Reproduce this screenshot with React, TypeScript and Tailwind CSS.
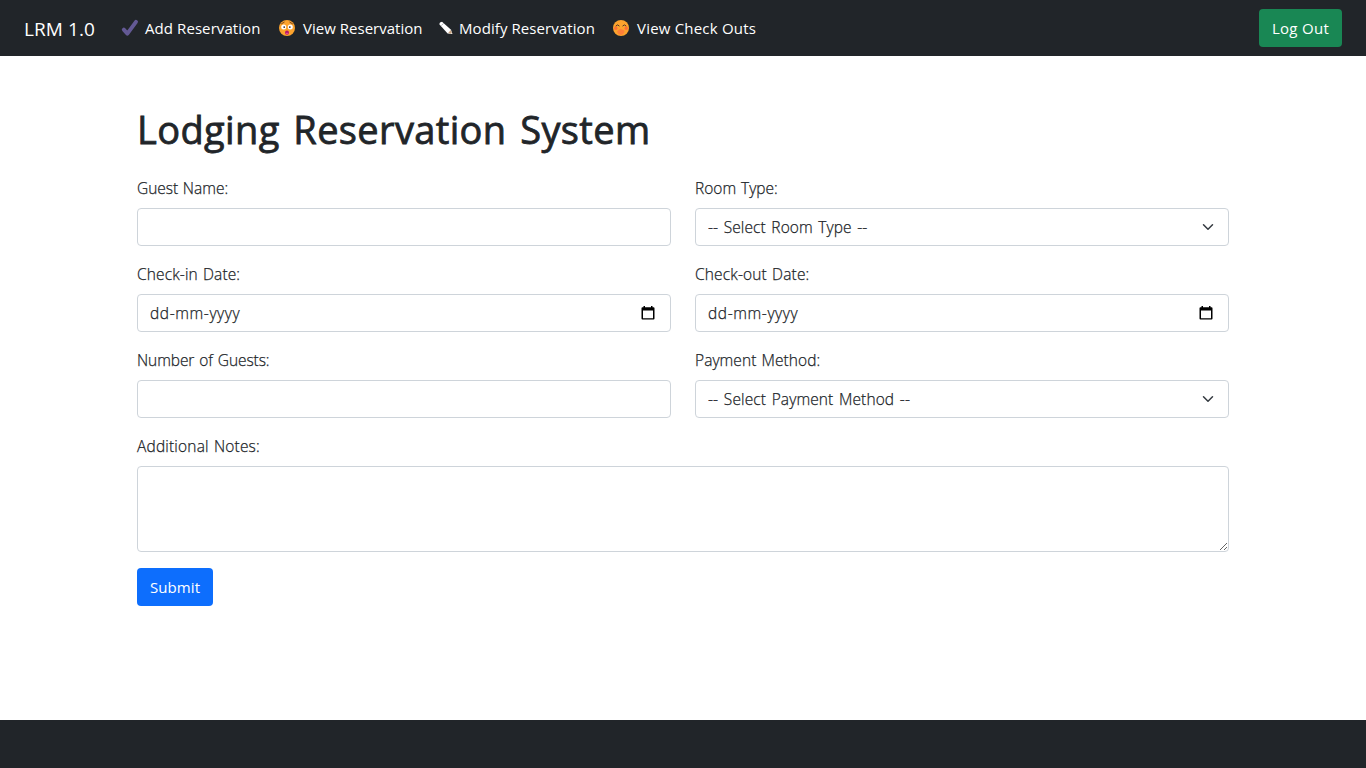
import React from "react";

const control =
  "h-[38px] w-full rounded border border-[#ced4da] bg-white text-[#212529] outline-none";

const bodyText = "text-[15.5px] leading-6 font-light [-webkit-text-stroke:0.25px_#212529]";

function CheckIcon() {
  return (
    <svg width="18" height="18" viewBox="0 0 18 18" className="shrink-0">
      <path d="M2.8 10.6 6.4 14.6 15 2.8" fill="none" stroke="#635994" strokeWidth="3.9" strokeLinecap="round" strokeLinejoin="round" />
    </svg>
  );
}

function FlushedFace() {
  return (
    <svg width="16" height="16" viewBox="0 0 16 16" className="shrink-0">
      <circle cx="8" cy="8" r="8" fill="#fca32d" />
      <path d="M2.5 3.8 5.2 2.2M10.8 2.2 13.5 3.8" stroke="#70401e" strokeWidth="0.9" strokeLinecap="round" />
      <circle cx="4.7" cy="7" r="2.5" fill="#fff" />
      <circle cx="11.3" cy="7" r="2.5" fill="#fff" />
      <circle cx="5.2" cy="7.1" r="0.9" fill="#3c2b2b" />
      <circle cx="10.8" cy="7.1" r="0.9" fill="#3c2b2b" />
      <ellipse cx="8" cy="12.6" rx="2" ry="2.2" fill="#b4146e" />
      <path d="M6.7 13.8a1.3 1 0 0 1 2.6 0" fill="#f55a9b" />
    </svg>
  );
}

function PencilIcon() {
  return (
    <svg width="14" height="14" viewBox="0 0 14 14" className="shrink-0">
      <path d="M.3 3.3Q.3 1.2 3 .8L12 8.700l1.3 4.300-4.700-.6z" fill="#fff" />
      <path d="m2.3 4.6 2.3-2.3" stroke="#8b929a" strokeWidth="0.7" />
      <path d="m9.2 12 2.5-3 1.6 4z" fill="#c7a27d" />
      <path d="m12 12.7.9-.9.4 1.3z" fill="#fff" />
    </svg>
  );
}

function GigglingFace() {
  return (
    <svg width="16" height="16" viewBox="0 0 16 16" className="shrink-0">
      <circle cx="8" cy="8" r="8" fill="#fca32d" />
      <circle cx="2.8" cy="8.3" r="1.7" fill="#ff6f38" />
      <circle cx="13.2" cy="8.3" r="1.7" fill="#ff6f38" />
      <path d="M3 5.8Q4.6 3.7 6.2 5.8M9.800 5.800Q11.400 3.700 13 5.800" fill="none" stroke="#51372b" strokeWidth="1" strokeLinecap="round" />
      <path d="M4 11.4 6.3 9.2Q7.2 8.4 8 9.1l2.500 1q1.600.9.8 2.500-1.300 2.700-4.100 2.200-2.500-.4-3.200-3.400z" fill="#ff8038" />
    </svg>
  );
}

function Chevron() {
  return (
    <svg width="16" height="12" viewBox="0 0 16 16" className="pointer-events-none absolute top-[13px] right-[13px]">
      <path d="m2 5 6 6 6-6" fill="none" stroke="#343a40" strokeWidth="2" strokeLinecap="round" strokeLinejoin="round" />
    </svg>
  );
}

function CalendarIcon() {
  return (
    <svg width="14" height="15" viewBox="0 0 14 15">
      <path fillRule="evenodd" d="M2.5 0H4v1.300h6V0h1.500v1.300h1a1 1 0 0 1 1 1v10.200a1 1 0 0 1-1 1h-11a1 1 0 0 1-1-1V2.300a1 1 0 0 1 1-1h1zM2 4.500v7.700h10V4.500z" fill="#000" />
    </svg>
  );
}

function Field({ label, tracking, children }: { label: string; tracking: string; children: React.ReactNode }) {
  return (
    <label className="block">
      <span className={`mb-2 block h-6 ${bodyText} ${tracking}`}>{label}</span>
      {children}
    </label>
  );
}

function DateControl() {
  return (
    <div className={`${control} flex items-center justify-between pr-[15px] pl-3`}>
      <span className={`tracking-[0.6px] ${bodyText}`}>dd-mm-yyyy</span>
      <CalendarIcon />
    </div>
  );
}

function SelectControl({ text, tracking }: { text: string; tracking: string }) {
  return (
    <div className="relative">
      <select className={`${control} block appearance-none px-3 [word-spacing:1.5px] ${bodyText} ${tracking}`}>
        <option>{text}</option>
      </select>
      <Chevron />
    </div>
  );
}

export default function App() {
  return (
    <div className="flex h-screen flex-col overflow-hidden bg-white font-['Open_Sans','Noto_Sans',sans-serif] text-[#212529]">
      <nav className="flex h-14 shrink-0 items-center bg-[#212529] px-6 text-[15px] tracking-[0.08px] text-white">
        <a className="w-[97px] pt-0.5 text-[19px] whitespace-nowrap">LRM 1.0</a>
        <a className="flex w-[158px] items-center gap-[6px] whitespace-nowrap">
          <CheckIcon />
          <span>Add Reservation</span>
        </a>
        <a className="flex w-[160px] items-center gap-2 whitespace-nowrap">
          <FlushedFace />
          <span className="tracking-[0.02px]">View Reservation</span>
        </a>
        <a className="flex w-[174px] items-center gap-[6px] whitespace-nowrap">
          <PencilIcon />
          <span>Modify Reservation</span>
        </a>
        <a className="flex items-center gap-2 whitespace-nowrap">
          <GigglingFace />
          <span className="tracking-[0.2px]">View Check Outs</span>
        </a>
        <button className="ml-auto h-[38px] w-[83px] rounded bg-[#198754] tracking-[0.3px]">Log Out</button>
      </nav>
      <main className="mx-auto w-[1092px] grow pt-12">
        <h1 className="mb-[22px] h-[50px] text-[38px] leading-[50px] font-normal tracking-[0.36px] whitespace-nowrap [word-spacing:3.5px] [-webkit-text-stroke:0.8px_#212529]">
          Lodging Reservation System
        </h1>
        <form className="grid grid-cols-2 gap-x-6 gap-y-4">
          <Field label="Guest Name:" tracking="tracking-[0px] [word-spacing:0.5px]">
            <input type="text" className={`${control} block px-3`} />
          </Field>
          <Field label="Room Type:" tracking="tracking-[0px] [word-spacing:1px]">
            <SelectControl text="-- Select Room Type --" tracking="tracking-[0.08px]" />
          </Field>
          <Field label="Check-in Date:" tracking="tracking-[0.13px] [word-spacing:1px]">
            <DateControl />
          </Field>
          <Field label="Check-out Date:" tracking="tracking-[0.15px] [word-spacing:1px]">
            <DateControl />
          </Field>
          <Field label="Number of Guests:" tracking="tracking-[-0.08px] [word-spacing:1px]">
            <input type="text" className={`${control} block px-3`} />
          </Field>
          <Field label="Payment Method:" tracking="tracking-[0.07px] [word-spacing:1px]">
            <SelectControl text="-- Select Payment Method --" tracking="tracking-[0.11px]" />
          </Field>
          <div className="col-span-2">
            <Field label="Additional Notes:" tracking="tracking-[0.18px] [word-spacing:1px]">
              <textarea className="block h-[86px] w-full rounded border border-[#ced4da] bg-white outline-none" />
            </Field>
          </div>
          <button type="button" className="h-[38px] w-[76px] rounded bg-[#0d6efd] text-[15px] tracking-[0.1px] text-white">Submit</button>
        </form>
      </main>
      <footer className="h-12 shrink-0 bg-[#212529]" />
    </div>
  );
}
